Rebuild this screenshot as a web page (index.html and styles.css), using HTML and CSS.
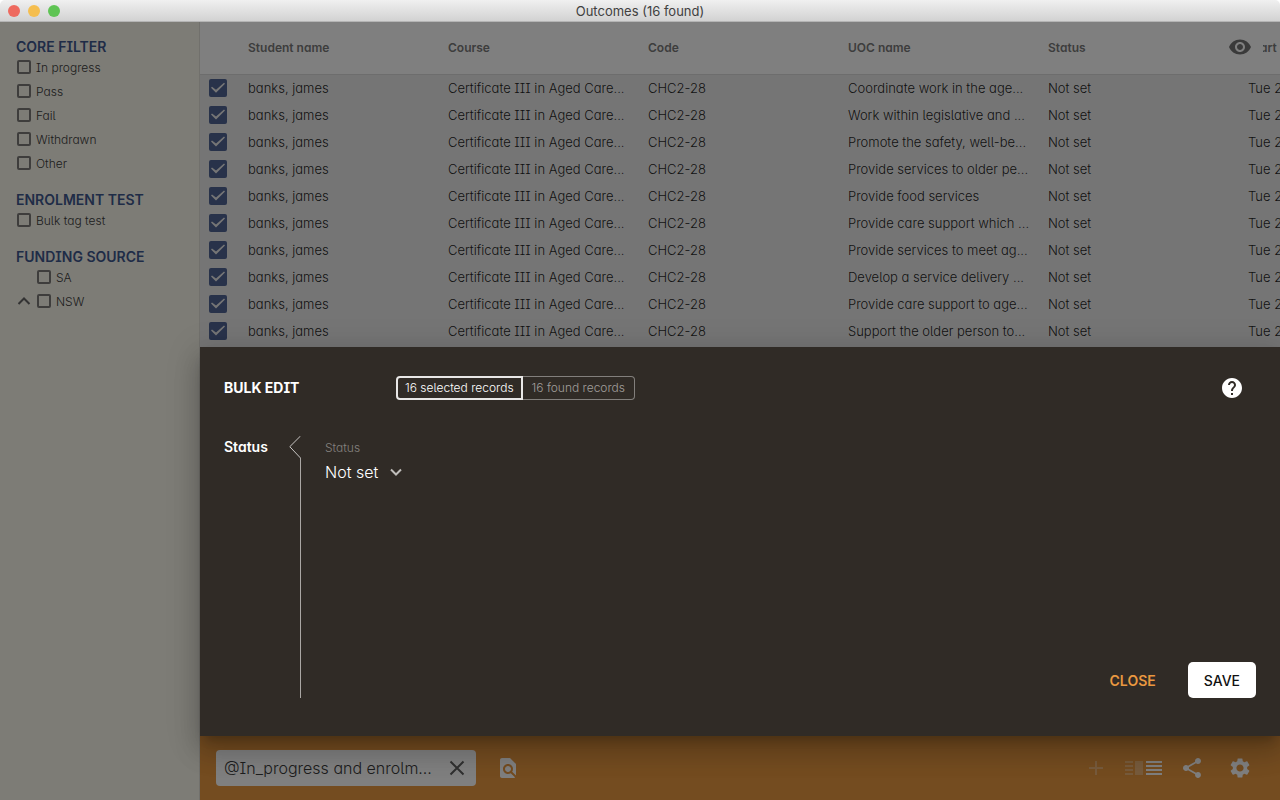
FILE: index.html
```html
<!DOCTYPE html>
<html lang="en">
<head>
<meta charset="utf-8">
<title>Outcomes (16 found)</title>
<link rel="stylesheet" href="styles.css">
</head>
<body>
<div class="window">
  <header class="titlebar">
    <div class="lights"><span class="light red"></span><span class="light yellow"></span><span class="light green"></span></div>
    <h1 class="title">Outcomes (16 found)</h1>
  </header>
  <div class="workspace">
    <aside class="sidebar">
      <section class="group">
        <h2 class="group-title">CORE FILTER</h2>
        <label class="filter"><input type="checkbox" class="tick">In progress</label>
        <label class="filter"><input type="checkbox" class="tick">Pass</label>
        <label class="filter"><input type="checkbox" class="tick">Fail</label>
        <label class="filter"><input type="checkbox" class="tick">Withdrawn</label>
        <label class="filter"><input type="checkbox" class="tick">Other</label>
      </section>
      <section class="group">
        <h2 class="group-title">ENROLMENT TEST</h2>
        <label class="filter"><input type="checkbox" class="tick">Bulk tag test</label>
      </section>
      <section class="group">
        <h2 class="group-title">FUNDING SOURCE</h2>
        <div class="branch"><span class="fold"></span><label class="filter"><input type="checkbox" class="tick">SA</label></div>
        <div class="branch"><button class="fold" aria-label="Collapse NSW"><svg width="16" height="16" viewBox="0 0 16 16"><path d="M2.500 11l5.500-5.500 5.500 5.500"/></svg></button><label class="filter"><input type="checkbox" class="tick">NSW</label></div>
      </section>
    </aside>
    <main class="main">
      <div class="list">
        <table class="table">
          <thead>
            <tr><th class="col-tick"></th><th>Student name</th><th>Course</th><th>Code</th><th>UOC name</th><th>Status</th><th>Start</th></tr>
          </thead>
          <tbody>
            <tr><td><input type="checkbox" class="pick" aria-label="Select row" checked></td><td>banks, james</td><td>Certificate III in Aged Care...</td><td>CHC2-28</td><td>Coordinate work in the age...</td><td>Not set</td><td>Tue 2</td></tr>
            <tr><td><input type="checkbox" class="pick" aria-label="Select row" checked></td><td>banks, james</td><td>Certificate III in Aged Care...</td><td>CHC2-28</td><td>Work within legislative and ...</td><td>Not set</td><td>Tue 2</td></tr>
            <tr><td><input type="checkbox" class="pick" aria-label="Select row" checked></td><td>banks, james</td><td>Certificate III in Aged Care...</td><td>CHC2-28</td><td>Promote the safety, well-be...</td><td>Not set</td><td>Tue 2</td></tr>
            <tr><td><input type="checkbox" class="pick" aria-label="Select row" checked></td><td>banks, james</td><td>Certificate III in Aged Care...</td><td>CHC2-28</td><td>Provide services to older pe...</td><td>Not set</td><td>Tue 2</td></tr>
            <tr><td><input type="checkbox" class="pick" aria-label="Select row" checked></td><td>banks, james</td><td>Certificate III in Aged Care...</td><td>CHC2-28</td><td>Provide food services</td><td>Not set</td><td>Tue 2</td></tr>
            <tr><td><input type="checkbox" class="pick" aria-label="Select row" checked></td><td>banks, james</td><td>Certificate III in Aged Care...</td><td>CHC2-28</td><td>Provide care support which ...</td><td>Not set</td><td>Tue 2</td></tr>
            <tr><td><input type="checkbox" class="pick" aria-label="Select row" checked></td><td>banks, james</td><td>Certificate III in Aged Care...</td><td>CHC2-28</td><td>Provide services to meet ag...</td><td>Not set</td><td>Tue 2</td></tr>
            <tr><td><input type="checkbox" class="pick" aria-label="Select row" checked></td><td>banks, james</td><td>Certificate III in Aged Care...</td><td>CHC2-28</td><td>Develop a service delivery ...</td><td>Not set</td><td>Tue 2</td></tr>
            <tr><td><input type="checkbox" class="pick" aria-label="Select row" checked></td><td>banks, james</td><td>Certificate III in Aged Care...</td><td>CHC2-28</td><td>Provide care support to age...</td><td>Not set</td><td>Tue 2</td></tr>
            <tr><td><input type="checkbox" class="pick" aria-label="Select row" checked></td><td>banks, james</td><td>Certificate III in Aged Care...</td><td>CHC2-28</td><td>Support the older person to...</td><td>Not set</td><td>Tue 2</td></tr>
          </tbody>
        </table>
        <button class="columns" aria-label="Choose columns"><svg width="24" height="24" viewBox="0 0 24 24"><path d="M12 4.500C7 4.500 2.730 7.610 1 12c1.730 4.390 6 7.500 11 7.500s9.270-3.110 11-7.500c-1.730-4.390-6-7.500-11-7.500zM12 17c-2.760 0-5-2.240-5-5s2.240-5 5-5 5 2.240 5 5-2.240 5-5 5zm0-8c-1.660 0-3 1.340-3 3s1.340 3 3 3 3-1.340 3-3-1.340-3-3-3z"/></svg></button>
      </div>
      <footer class="bottombar">
        <div class="search">
          <input class="search-input" type="text" aria-label="Search" value="@In_progress and enrolm...">
          <button class="clear" aria-label="Clear search"><svg width="24" height="24" viewBox="0 0 24 24"><path d="M5.500 5.500l13 13M18.500 5.500l-13 13"/></svg></button>
        </div>
        <button class="tool find" aria-label="Find in page"><svg width="24" height="24" viewBox="0 0 24 24"><path d="M20 19.590V8l-6-6H6c-1.100 0-1.990.9-1.990 2L4 20c0 1.100.89 2 1.990 2H18c.45 0 .85-.15 1.190-.4l-4.430-4.430c-.8.520-1.740.83-2.760.83-2.760 0-5-2.240-5-5s2.240-5 5-5 5 2.240 5 5c0 1.020-.31 1.960-.83 2.750L20 19.590zM9 13c0 1.660 1.340 3 3 3s3-1.340 3-3-1.340-3-3-3-3 1.340-3 3z"/></svg></button>
        <div class="tools">
          <button class="tool faint" aria-label="Add"><svg width="24" height="24" viewBox="0 0 24 24"><path d="M19 13h-6v6h-2v-6H5v-2h6V5h2v6h6v2z"/></svg></button>
          <button class="tool wide" aria-label="Change view"><svg width="38" height="24" viewBox="0 0 38 24"><path class="dim" d="M0 5h8v2H0zM0 9h8v2H0zM0 13h8v2H0zM0 17h8v2H0zM10 5h8v14h-8z"/><path d="M21 5h16v2H21zM21 9h16v2H21zM21 13h16v2H21zM21 17h16v2H21z"/></svg></button>
          <button class="tool" aria-label="Share"><svg width="24" height="24" viewBox="0 0 24 24"><path d="M18 16.080c-.76 0-1.440.3-1.960.77L8.910 12.700c.05-.23.090-.46.090-.7s-.04-.47-.09-.7l7.050-4.110c.54.5 1.250.81 2.040.81 1.660 0 3-1.340 3-3s-1.340-3-3-3-3 1.340-3 3c0 .24.04.47.09.7L8.040 9.810C7.500 9.310 6.790 9 6 9c-1.660 0-3 1.340-3 3s1.340 3 3 3c.79 0 1.500-.31 2.040-.81l7.120 4.160c-.05.21-.08.43-.08.65 0 1.610 1.310 2.920 2.920 2.920s2.920-1.310 2.920-2.920-1.310-2.920-2.920-2.920z"/></svg></button>
          <button class="tool" aria-label="Settings"><svg width="24" height="24" viewBox="0 0 24 24"><path d="M19.140 12.940c.04-.3.060-.61.060-.94 0-.32-.02-.64-.07-.94l2.030-1.580c.18-.14.23-.41.12-.61l-1.920-3.320c-.12-.22-.37-.29-.59-.22l-2.390.96c-.5-.38-1.030-.7-1.620-.94l-.36-2.540c-.04-.24-.24-.41-.48-.41h-3.840c-.24 0-.43.17-.47.41l-.36 2.540c-.59.24-1.130.57-1.620.94l-2.390-.96c-.22-.08-.47 0-.59.22L2.740 8.870c-.12.21-.08.47.12.61l2.030 1.580c-.05.3-.09.63-.09.94s.02.64.07.94l-2.030 1.580c-.18.14-.23.41-.12.61l1.920 3.320c.12.22.37.29.59.22l2.390-.96c.5.38 1.030.7 1.620.94l.36 2.540c.05.24.24.41.48.41h3.840c.24 0 .44-.17.47-.41l.36-2.540c.59-.24 1.130-.56 1.620-.94l2.390.96c.22.08.47 0 .59-.22l1.920-3.320c.12-.22.07-.47-.12-.61l-2.010-1.580zM12 15.600c-1.980 0-3.600-1.620-3.600-3.600s1.620-3.600 3.600-3.600 3.600 1.620 3.600 3.600-1.620 3.600-3.600 3.600z"/></svg></button>
        </div>
      </footer>
    </main>
    <div class="backdrop"></div>
    <section class="panel" role="dialog" aria-labelledby="panel-title">
      <div class="panel-head">
        <h2 class="panel-title" id="panel-title">BULK EDIT</h2>
        <div class="toggle">
          <button class="choice chosen">16 selected records</button><button class="choice">16 found records</button>
        </div>
        <button class="help" aria-label="Help"><svg width="24" height="24" viewBox="0 0 24 24"><path d="M12 2C6.480 2 2 6.480 2 12s4.480 10 10 10 10-4.480 10-10S17.520 2 12 2zm1 17h-2v-2h2v2zm2.070-7.750l-.9.920C13.450 12.900 13 13.500 13 15h-2v-.5c0-1.100.45-2.100 1.170-2.830l1.240-1.260c.37-.36.59-.86.59-1.410 0-1.100-.9-2-2-2s-2 .9-2 2H8c0-2.210 1.790-4 4-4s4 1.790 4 4c0 .88-.36 1.680-.93 2.250z"/></svg></button>
      </div>
      <div class="panel-body">
        <a class="section-link" href="#status">Status</a>
        <div class="divider"><svg class="pointer" width="12" height="22" viewBox="0 0 12 22"><path d="M11.500 0L.8 10.700 11.500 22"/></svg></div>
        <div class="field">
          <label class="field-label" for="status">Status</label>
          <div class="select-row">
            <select class="select" id="status"><option>Not set</option></select>
            <svg class="chevron" width="12" height="8" viewBox="0 0 12 8"><path d="M1 1.500l5 5 5-5"/></svg>
          </div>
        </div>
        <div class="actions">
          <button class="btn close">CLOSE</button>
          <button class="btn save">SAVE</button>
        </div>
      </div>
    </section>
  </div>
</div>
</body>
</html>
```
FILE: styles.css
```css
* { box-sizing: border-box; }

body {
  margin: 0;
  background: #fff;
  color: rgba(0, 0, 0, 0.87);
  font-family: Inter, "Liberation Sans", sans-serif;
  font-size: 13px;
  font-weight: 300;
  font-feature-settings: "cv05", "cv08", "cv11";
}

h1, h2 { margin: 0; }

button, input, select {
  margin: 0;
  padding: 0;
  border: 0;
  background: none;
  color: inherit;
  font: inherit;
  font-feature-settings: inherit;
}

svg { display: block; fill: currentColor; }

.window {
  display: flex;
  flex-direction: column;
  height: 100vh;
  overflow: hidden;
}

/* Title bar */
.titlebar {
  display: grid;
  grid-template-columns: 1fr auto 1fr;
  align-items: center;
  height: 22px;
  padding: 0 8px;
  background: linear-gradient(#f0f0f0, #d2d2d2);
  border-bottom: 1px solid #b4b4b4;
  border-radius: 5px 5px 0 0;
}
.lights { display: flex; gap: 8px; }
.light { width: 12px; height: 12px; border-radius: 50%; }
.red { background: #ee6a5f; }
.yellow { background: #f5be4f; }
.green { background: #5fc454; }
.title { font-size: 13px; font-weight: 400; line-height: 16px; color: #404040; }

.workspace {
  position: relative;
  display: flex;
  flex: 1;
  min-height: 0;
}

/* Filters */
.sidebar {
  display: flex;
  flex-direction: column;
  gap: 17px;
  width: 200px;
  flex: none;
  padding: 17px 16px;
  background: #fbf8ed;
  border-right: 1px solid #e2e0d8;
}
.group-title { font-size: 14px; font-weight: 600; line-height: 16px; color: #3f588f; }
.filter {
  display: flex;
  align-items: center;
  gap: 5px;
  height: 24px;
  padding-left: 1px;
  font-size: 12px;
  color: #3c3c3c;
}
.tick {
  appearance: none;
  width: 14px;
  height: 14px;
  border: 2px solid #7c7b78;
  border-radius: 2px;
}
.branch { display: flex; align-items: center; gap: 4px; }
.fold { width: 16px; height: 16px; }
.fold svg { fill: none; stroke: #666; stroke-width: 2; }

/* Outcomes list */
.main { display: flex; flex-direction: column; flex: 1; min-width: 0; }
.list { position: relative; flex: 1; min-height: 0; overflow: hidden; background: #ebebeb; }
.table { width: 100%; table-layout: fixed; border-collapse: collapse; }
.table th {
  width: 200px;
  height: 52px;
  padding: 0;
  background: #fff;
  border-bottom: 1px solid #dadada;
  color: #7a7a7a;
  font-size: 12px;
  font-weight: 600;
  text-align: left;
}
.table .col-tick { width: 48px; }
.table th:last-child { width: 32px; }
.table td { height: 27px; padding: 0; line-height: 16px; white-space: nowrap; }
.pick {
  appearance: none;
  display: block;
  width: 18px;
  height: 18px;
  margin-left: 9px;
  background: #506495;
  border-radius: 2px;
}
.pick:checked::before {
  content: "";
  display: block;
  width: 18px;
  height: 18px;
  background: #ebebeb;
  clip-path: polygon(7px 14px, 2px 9px, 3px 8px, 7px 11px, 15px 4px, 16px 5px);
}
.columns {
  position: absolute;
  top: 0;
  right: 17px;
  display: grid;
  place-items: center;
  width: 46px;
  height: 50px;
  background: #fff;
  color: #757575;
}

/* Bottom bar */
.bottombar {
  display: flex;
  align-items: center;
  height: 64px;
  flex: none;
  padding: 0 16px;
  background: #e99840;
  color: #fff;
}
.search {
  display: flex;
  align-items: center;
  width: 260px;
  height: 36px;
  padding: 0 7px 0 8px;
  background: #fff;
  border-radius: 4px;
  color: #3c3c3c;
}
.search-input { flex: 1; min-width: 0; height: 24px; font-size: 16px; }
.clear svg { fill: none; stroke: #606060; stroke-width: 2; }
.find { margin-left: 20px; }
.tools { display: flex; align-items: center; gap: 24px; margin-left: auto; padding-right: 12px; }
.wide { margin: 0 -7px 0 -7px; }
.faint, .dim { opacity: 0.3; }

/* Bulk edit panel */
.backdrop { position: absolute; inset: 0; background: rgba(0, 0, 0, 0.5); }
.panel {
  position: absolute;
  left: 200px;
  right: 0;
  bottom: 64px;
  padding: 29px 24px 38px;
  background: #302b26;
  color: #fff;
  box-shadow: 0 8px 10px -5px rgba(0, 0, 0, 0.2), 0 16px 24px 2px rgba(0, 0, 0, 0.14), 0 6px 30px 5px rgba(0, 0, 0, 0.12);
}
.panel-head { display: flex; align-items: center; height: 24px; }
.panel-title { width: 172px; font-size: 14px; font-weight: 700; line-height: 24px; }
.toggle { display: flex; }
.choice {
  height: 24px;
  padding: 0 9px;
  border: 1px solid #827f7c;
  border-left: 0;
  border-radius: 0 4px 4px 0;
  color: #a19e9b;
  font-size: 12px;
  line-height: 20px;
}
.chosen { border: 2px solid #e8e7e6; border-radius: 4px 0 0 4px; padding: 0 7px; color: #fff; }
.help { margin-left: auto; margin-right: 12px; }
.panel-body { display: flex; min-height: 262px; margin-top: 36px; }
.section-link {
  width: 65px;
  color: #fff;
  font-size: 14px;
  font-weight: 600;
  line-height: 22px;
  text-decoration: none;
}
.divider { display: flex; flex-direction: column; width: 12px; }
.divider::after { content: ""; flex: 1; border-right: 1px solid #aaa7a4; }
.pointer { fill: none; stroke: #c9c7c5; stroke-width: 1; }
.field { padding-left: 24px; }
.field-label { display: block; color: #85827f; font-size: 12px; line-height: 24px; }
.select-row { display: flex; align-items: center; gap: 11px; height: 24px; }
.select { appearance: none; font-size: 16px; line-height: 24px; }
.select option { color: #222; }
.chevron { fill: none; stroke: #c0bebb; stroke-width: 2; }
.actions { display: flex; align-self: flex-end; gap: 16px; margin-left: auto; }
.btn { height: 36px; padding: 0 16px; border-radius: 5px; font-size: 14px; font-weight: 500; }
.close { color: #e99840; font-weight: 600; }
.save { background: #fff; color: #111; }
```
